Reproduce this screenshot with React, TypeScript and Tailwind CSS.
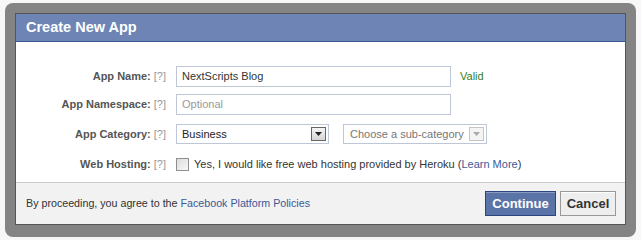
import React from 'react';

const font = { fontFamily: '"Liberation Sans", Arial, sans-serif' };

function Help() {
  return <span className="ml-[3px] text-[11px] font-normal text-[#999]">[?]</span>;
}

function Label({ text }: { text: string }) {
  return (
    <div className="w-[150px] shrink-0 text-right text-[11px] font-bold text-[#555]">
      {text}
      <Help />
    </div>
  );
}

function Arrow({ dim }: { dim?: boolean }) {
  return (
    <svg width="7" height="4" viewBox="0 0 7 4">
      <path d="M0 0h7L3.5 4z" fill={dim ? '#aaa' : '#222'} />
    </svg>
  );
}

export default function App() {
  return (
    <div className="h-[240px] w-[641px] bg-[#f7f7f7] pl-[5px] pt-[3px]" style={font}>
      <div className="h-[234px] w-[631px] rounded-[8px] bg-[#848484] px-[10px] pb-[12px] pt-[10px]">
        <div className="flex h-full flex-col border border-[#555] bg-white">
          <div className="flex h-[28px] shrink-0 items-center border-b border-[#3b5998] bg-[#6d84b4] pl-[10px] text-[14.5px] font-bold text-white">
            Create New App
          </div>
          <div className="flex flex-1 flex-col pt-[24px]">
            <div className="flex h-[21px] items-center gap-[10px]">
              <Label text="App Name:" />
              <div className="flex h-[21px] w-[275px] items-center border border-[#bdc7d8] pl-[5px] text-[11px] text-[#333]">
                NextScripts Blog
              </div>
              <span className="ml-[-1px] text-[11px] text-[#3a7d1a]">Valid</span>
            </div>
            <div className="mt-[7px] flex h-[21px] items-center gap-[10px]">
              <Label text="App Namespace:" />
              <div className="flex h-[21px] w-[275px] items-center border border-[#bdc7d8] pl-[5px] text-[11px] text-[#999]">
                Optional
              </div>
            </div>
            <div className="mt-[9px] flex h-[20px] items-center gap-[10px]">
              <Label text="App Category:" />
              <div className="flex h-[20px] w-[153px] items-center justify-between border border-[#bdc7d8] pl-[5px] pr-[2px] text-[11px] text-[#222]">
                Business
                <div className="flex h-[14px] w-[15px] items-center justify-center border border-[#666] bg-gradient-to-b from-[#f4f4f4] to-[#d6d6d6]">
                  <Arrow />
                </div>
              </div>
              <div className="ml-[4px] flex h-[20px] w-[144px] items-center justify-between border border-[#bdc7d8] pl-[6px] pr-[2px] text-[11px] text-[#777]">
                Choose a sub-category
                <div className="flex h-[14px] w-[15px] items-center justify-center border border-[#c4c4c4] bg-[#f4f4f4]">
                  <Arrow dim />
                </div>
              </div>
            </div>
            <div className="mt-[10px] flex h-[20px] items-center gap-[10px]">
              <Label text="Web Hosting:" />
              <div className="flex items-center text-[11px] text-[#333]">
                <div className="mr-[5px] h-[13px] w-[13px] border border-[#8f8f8f] bg-gradient-to-br from-[#dcdcdc] to-[#f8f8f8]" />
                Yes, I would like free web hosting provided by Heroku (<span className="text-[#3b5998]">Learn More</span>)
              </div>
            </div>
          </div>
          <div className="flex h-[42px] shrink-0 items-center justify-between border-t border-[#ccc] bg-[#f2f2f2] pl-[10px] pr-[9px]">
            <div className="text-[10.7px] text-[#333]">
              By proceeding, you agree to the <span className="text-[#3b5998]">Facebook Platform Policies</span>
            </div>
            <div className="flex gap-[4px]">
              <div className="flex h-[25px] w-[71px] items-center justify-center border border-[#29447e] bg-[#5b74a8] text-[13px] font-bold text-white shadow-[inset_0_1px_0_#8a9cc2]">
                Continue
              </div>
              <div className="flex h-[25px] w-[56px] items-center justify-center border border-[#999] bg-[#eee] text-[13px] font-bold text-[#333] shadow-[inset_0_1px_0_#fff]">
                Cancel
              </div>
            </div>
          </div>
        </div>
      </div>
    </div>
  );
}
